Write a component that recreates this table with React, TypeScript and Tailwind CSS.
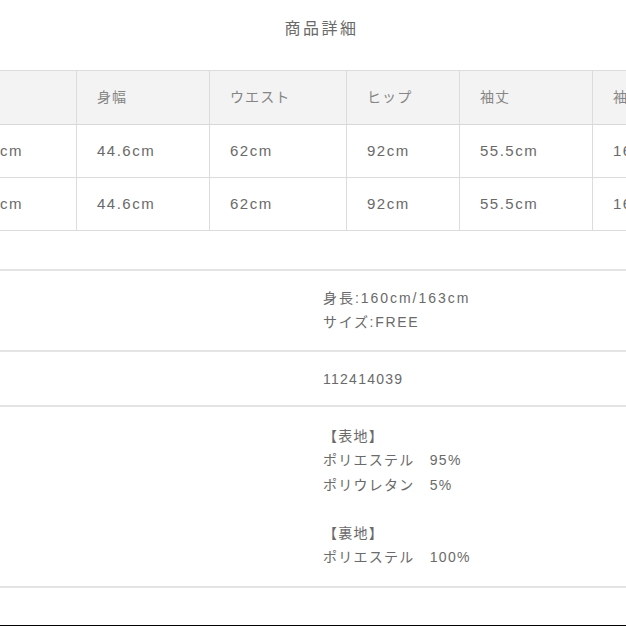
import React from "react";

const font = { fontFamily: '"Liberation Sans", "Noto Sans CJK JP", sans-serif' };

const headers = ["", "身幅", "ウエスト", "ヒップ", "袖丈", "袖口"];
const widths = ["w-[76px]", "w-[133px]", "w-[137px]", "w-[113px]", "w-[133px]", "w-[120px]"];
const rows = [
  ["cm", "44.6cm", "62cm", "92cm", "55.5cm", "16cm"],
  ["cm", "44.6cm", "62cm", "92cm", "55.5cm", "16cm"],
];

export default function App() {
  return (
    <div
      className="w-[626px] h-[626px] overflow-hidden bg-white flex flex-col text-[#6e6e6e]"
      style={font}
    >
      <div className="h-[70px] pt-[17px] pl-[17px] text-center text-[16px] leading-[24px] tracking-[0.16em] text-[#6a6a6a]">
        商品詳細
      </div>

      <div className="overflow-hidden w-[626px]">
        <div className="w-[712px] border-t border-[#dcdcdc]">
          <div className="flex h-[54px] bg-[#f3f3f3] border-b border-[#d8d8d8]">
            {headers.map((h, i) => (
              <div
                key={i}
                className={`${widths[i]} shrink-0 flex items-center ${i === 0 ? "" : "border-l border-[#dcdcdc] pl-[20px]"} text-[14px] tracking-[0.08em] text-[#858585]`}
              >
                {h}
              </div>
            ))}
          </div>
          {rows.map((r, ri) => (
            <div key={ri} className="flex h-[53px] border-b border-[#dcdcdc]">
              {r.map((c, i) => (
                <div
                  key={i}
                  className={`${widths[i]} shrink-0 flex items-center ${i === 0 ? "pl-0" : "border-l border-[#dcdcdc] pl-[20px]"} text-[15px] tracking-[0.1em] text-[#6a6a6a]`}
                >
                  {c}
                </div>
              ))}
            </div>
          ))}
        </div>
      </div>

      <div className="mt-[38px] border-t-2 border-[#e4e4e4]" />
      <div className="flex flex-col text-[14px] leading-[24px] tracking-[0.09em] text-[#6a6a6a]">
        <div className="grid grid-cols-[323px_1fr] pt-[15px] pb-[16px] border-b-2 border-[#e4e4e4]">
          <div />
          <div>
            <div className="tracking-[0.14em]">身長:160cm/163cm</div>
            <div className="tracking-[0.12em]">サイズ:FREE</div>
          </div>
        </div>
        <div className="grid grid-cols-[323px_1fr] pt-[15px] pb-[14px] border-b-2 border-[#e4e4e4]">
          <div />
          <div>112414039</div>
        </div>
        <div className="grid grid-cols-[323px_1fr] pt-[17px] pb-[16px] border-b-2 border-[#e4e4e4]">
          <div />
          <div className="leading-[24.3px]">
            <div>【表地】</div>
            <div>ポリエステル　95%</div>
            <div>ポリウレタン　5%</div>
            <div>&nbsp;</div>
            <div>【裏地】</div>
            <div>ポリエステル　100%</div>
          </div>
        </div>
      </div>
      <div className="flex-1" />
      <div className="h-[1px] bg-black" />
    </div>
  );
}
